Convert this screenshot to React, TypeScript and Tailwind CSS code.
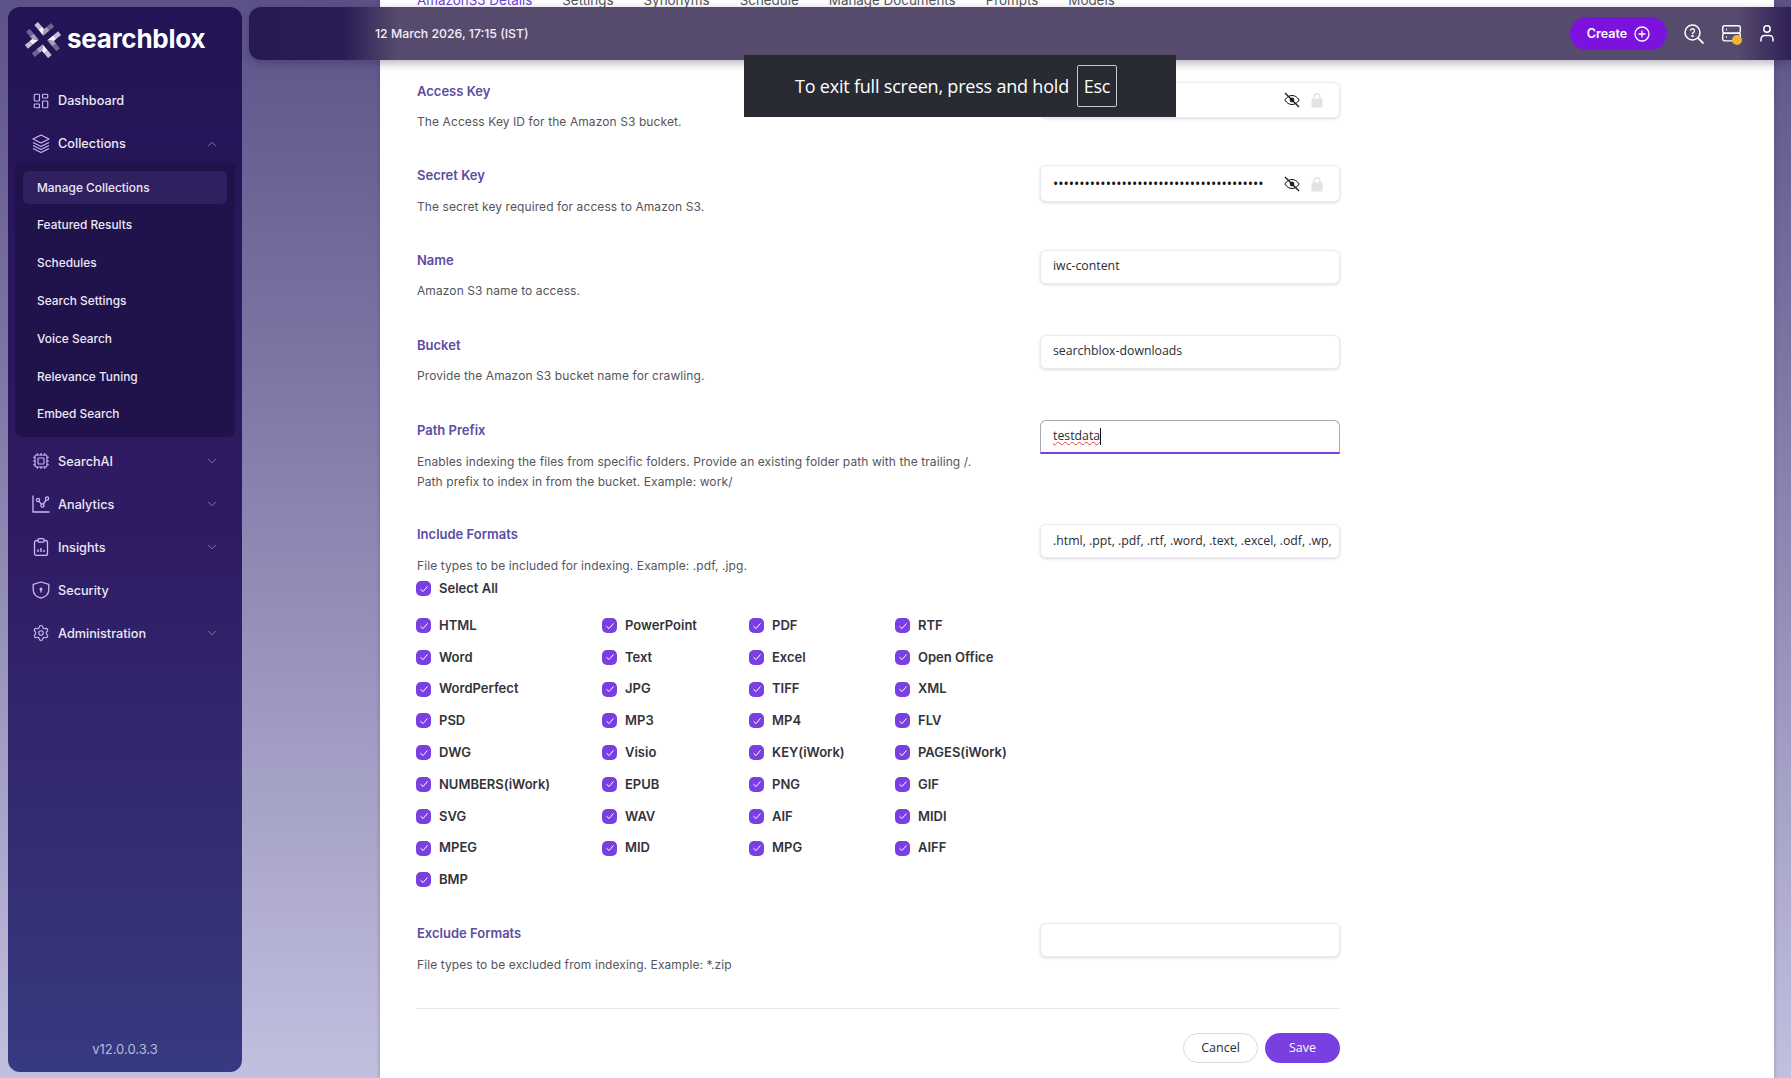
import { ChevronDown, ChevronUp, Cpu, LayoutDashboard, Settings } from "lucide-react";
import type { ReactNode } from "react";

const inter = "font-['Inter',sans-serif]";
const openSans = "font-['Open_Sans',sans-serif]";

function LayersIcon() {
  return (
    <svg width="18" height="20" viewBox="0 0 18 20" fill="none" stroke="currentColor" strokeWidth="1.2" strokeLinejoin="round">
      <path d="M9 1 17 5 9 9 1 5z" />
      <path d="M1 8.5 9 12.5 17 8.5" />
      <path d="M1 11.5 9 15.5 17 11.5" />
      <path d="M1 14.5 9 18.5 17 14.5" />
    </svg>
  );
}

function AnalyticsIcon() {
  return (
    <svg width="18" height="18" viewBox="0 0 18 18" fill="none" stroke="currentColor" strokeWidth="1.3">
      <path d="M1 0.5V17H17.5" />
      <circle cx="6" cy="5" r="1.6" />
      <circle cx="10.5" cy="10.5" r="1.6" />
      <circle cx="15" cy="3.5" r="1.6" />
      <path d="M7 6.3 9.5 9.2M11.3 9 14.2 5" />
    </svg>
  );
}

function InsightsIcon() {
  return (
    <svg width="18" height="18" viewBox="0 0 18 18" fill="none" stroke="currentColor" strokeWidth="1.3" strokeLinejoin="round">
      <rect x="2.5" y="2.5" width="13" height="15" rx="2" />
      <rect x="6" y="0.7" width="6" height="3.4" rx="1.2" fill="#2f1b63" />
      <path d="M6 14V11.5M9 14V10M12 14V12" strokeWidth="1.4" />
    </svg>
  );
}

function ShieldIcon() {
  return (
    <svg width="18" height="18" viewBox="0 0 18 18" fill="none" stroke="currentColor" strokeWidth="1.3" strokeLinejoin="round">
      <path d="M9 1 16.8 3.4V8.5C16.8 13 13.5 16 9 17.2 4.5 16 1.2 13 1.2 8.5V3.4z" />
      <circle cx="9" cy="8" r="1.5" fill="currentColor" stroke="none" />
      <path d="M9 8.5V11.5" strokeWidth="1.3" />
    </svg>
  );
}

function Logo() {
  const arm = (
    <>
      <polygon points="0,-4.5 -6,-10.5 -2.5,-14 0,-11.5" fill="#f4f2f8" />
      <polygon points="-6,-10.5 -10.5,-15 -7,-18.5 -2.5,-14" fill="#c5c0d6" />
      <polygon points="0,-4.5 6,-10.5 2.5,-14 0,-11.5" fill="#a5a0bd" />
      <polygon points="6,-10.5 10.5,-15 7,-18.5 2.5,-14" fill="#6e6690" />
    </>
  );
  return (
    <svg width="38" height="38" viewBox="-20 -20 40 40" className="shrink-0">
      <g transform="rotate(5)">
        {arm}
        <g transform="rotate(90)">{arm}</g>
        <g transform="rotate(180)">{arm}</g>
        <g transform="rotate(270)">{arm}</g>
      </g>
    </svg>
  );
}

function NavItem({ icon, label, chevron }: { icon: ReactNode; label: string; chevron?: "up" | "down" }) {
  return (
    <div className="flex h-[43px] items-center pl-6 pr-[23px] text-[12.7px] font-medium text-[#ece8f6]">
      <span className="flex w-[18px] justify-center text-[#cdb8f6]">{icon}</span>
      <span className="ml-2">{label}</span>
      {chevron === "up" && <ChevronUp className="ml-auto text-[#8d82ad]" size={14} strokeWidth={1.5} />}
      {chevron === "down" && <ChevronDown className="ml-auto text-[#8d82ad]" size={14} strokeWidth={1.5} />}
    </div>
  );
}

function Sidebar() {
  const subItems = ["Featured Results", "Schedules", "Search Settings", "Voice Search", "Relevance Tuning", "Embed Search"];
  return (
    <aside className={`${inter} ml-2 mt-[7px] flex h-[1065px] w-[234px] shrink-0 flex-col rounded-[12px] bg-gradient-to-b from-[#221455] via-[#2f1b63] to-[#363a80]`}>
      <div className="ml-[16px] mt-[13px] flex h-[40px] items-center gap-[5px]">
        <Logo />
        <span className="-mt-[2px] text-[26px] font-bold leading-none tracking-[-0.25px] text-white">searchblox</span>
      </div>
      <div className="mt-[19px]">
        <NavItem icon={<LayoutDashboard size={18} strokeWidth={1.5} />} label="Dashboard" />
        <NavItem icon={<LayersIcon />} label="Collections" chevron="up" />
      </div>
      <div className="mx-[7px] -mt-[2px] flex flex-col gap-[4.8px] rounded-b-[8px] bg-[#20124a] px-2 pb-[6px] pt-2 text-[11.9px] font-medium text-[#ece8f6]">
        <div className="flex h-[33px] items-center rounded-[6px] bg-[#31205f] pl-[14px]">Manage Collections</div>
        {subItems.map((item) => (
          <div key={item} className="flex h-[33px] items-center pl-[14px]">
            {item}
          </div>
        ))}
      </div>
      <div className="mt-[3px]">
        <NavItem icon={<Cpu size={18} strokeWidth={1.5} />} label="SearchAI" chevron="down" />
        <NavItem icon={<AnalyticsIcon />} label="Analytics" chevron="down" />
        <NavItem icon={<InsightsIcon />} label="Insights" chevron="down" />
        <NavItem icon={<ShieldIcon />} label="Security" />
        <NavItem icon={<Settings size={18} strokeWidth={1.5} />} label="Administration" chevron="down" />
      </div>
      <div className="mt-auto pb-[13px] text-center text-[13px] text-[#b5bbd8]">v12.0.0.3.3</div>
    </aside>
  );
}

function EyeOff() {
  return (
    <svg width="16" height="16" viewBox="0 0 16 16" fill="none" stroke="#111" strokeWidth="1">
      <path d="M0.8 8C3 4.8 5.3 3.5 8 3.5S13 4.8 15.2 8C13 11.2 10.7 12.5 8 12.5S3 11.2 0.8 8z" />
      <circle cx="8" cy="8" r="2.4" fill="#333" stroke="none" />
      <path d="M1 1 15 15" strokeWidth="1.2" />
    </svg>
  );
}

function LockIcon() {
  return (
    <svg width="12" height="16" viewBox="0 0 12 16" fill="#e3e3e5">
      <rect x="0.5" y="6.5" width="11" height="9" rx="1" />
      <path d="M2.5 7V4.5a3.5 3.5 0 0 1 7 0V7H8V4.5a2 2 0 0 0-4 0V7z" />
    </svg>
  );
}

function Field({ height, children }: { height: string; children?: ReactNode }) {
  return (
    <div className={`${openSans} ${height} flex w-[300px] items-center overflow-hidden whitespace-nowrap rounded-[6px] border border-[#eceaf1] bg-white pl-[12px] pr-[16px] text-[12.3px] text-[#2c2c33] shadow-[0_1px_3px_rgba(60,50,100,0.18)]`}>
      {children}
    </div>
  );
}

function SecretActions() {
  return (
    <span className="ml-auto flex items-center gap-[11px]">
      <EyeOff />
      <LockIcon />
    </span>
  );
}

function Row({ label, lines, field, rowClass }: { label: string; lines: string[]; field: ReactNode; rowClass: string }) {
  return (
    <div className={`flex justify-between ${rowClass}`}>
      <div className="pl-px">
        <div className="h-5 text-[13px] font-semibold leading-5 text-[#5d4ca3]">{label}</div>
        <div className="mt-[11.5px] text-[12px] leading-5 tracking-[0.09px] text-[#55555c]">
          {lines.map((line) => (
            <div key={line}>{line}</div>
          ))}
        </div>
      </div>
      {field}
    </div>
  );
}

function Check({ label, className }: { label: string; className?: string }) {
  return (
    <div className={`flex items-center gap-[8px] text-[13px] font-semibold text-[#33333a] ${className ?? ""}`}>
      <span className="flex h-[15px] w-[15px] items-center justify-center rounded-[5px] bg-[#7a3fe0]">
        <svg width="10" height="10" viewBox="0 0 10 10" fill="none" stroke="#fff" strokeWidth="1">
          <path d="M1.5 5.2 4 7.6 8.5 2.4" />
        </svg>
      </span>
      {label}
    </div>
  );
}

const formats = [
  "HTML", "PowerPoint", "PDF", "RTF",
  "Word", "Text", "Excel", "Open Office",
  "WordPerfect", "JPG", "TIFF", "XML",
  "PSD", "MP3", "MP4", "FLV",
  "DWG", "Visio", "KEY(iWork)", "PAGES(iWork)",
  "NUMBERS(iWork)", "EPUB", "PNG", "GIF",
  "SVG", "WAV", "AIF", "MIDI",
  "MPEG", "MID", "MPG", "AIFF",
  "BMP",
];

function Panel() {
  const tabs = ["Settings", "Synonyms", "Schedule", "Manage Documents", "Prompts", "Models"];
  return (
    <main className={`${inter} ml-[138px] h-[1078px] w-[1394px] shrink-0 overflow-hidden bg-white pl-[36px] shadow-[0_0_4px_rgba(60,50,100,0.4)]`}>
      <div className="-mt-[9px] flex h-[18px] items-center gap-[30px] pl-px text-[13.4px] text-[#55555c]">
        <span className="text-[#6d3fd8]">AmazonS3 Details</span>
        {tabs.map((tab) => (
          <span key={tab}>{tab}</span>
        ))}
      </div>

      <div className="mt-[71.5px] w-[924px]">
        <Row
          rowClass="h-[84.5px]"
          label="Access Key"
          lines={["The Access Key ID for the Amazon S3 bucket."]}
          field={
            <Field height="h-[36px] mt-px">
              <SecretActions />
            </Field>
          }
        />
        <Row
          rowClass="h-[84.5px]"
          label="Secret Key"
          lines={["The secret key required for access to Amazon S3."]}
          field={
            <Field height="h-[37px]">
              <span className="text-[14px] text-[#111]">{"•".repeat(40)}</span>
              <SecretActions />
            </Field>
          }
        />
        <Row
          rowClass="h-[85px]"
          label="Name"
          lines={["Amazon S3 name to access."]}
          field={<Field height="h-[34px]">iwc-content</Field>}
        />
        <Row
          rowClass="h-[85.5px]"
          label="Bucket"
          lines={["Provide the Amazon S3 bucket name for crawling."]}
          field={<Field height="h-[34px]">searchblox-downloads</Field>}
        />
        <Row
          rowClass="h-[104px]"
          label="Path Prefix"
          lines={[
            "Enables indexing the files from specific folders. Provide an existing folder path with the trailing /.",
            "Path prefix to index in from the bucket. Example: work/",
          ]}
          field={
            <div className={`${openSans} flex h-[34px] w-[300px] items-center rounded-t-[6px] border border-b-2 border-[#aaa9af] border-b-[#7a3fe0] pl-[12px] text-[12.3px] text-[#2c2c33]`}>
              <span className="underline decoration-[#e2403f] decoration-wavy decoration-1">testdata</span>
              <span className="h-[17px] w-px bg-[#111]" />
            </div>
          }
        />
        <Row
          rowClass="h-[55px]"
          label="Include Formats"
          lines={["File types to be included for indexing. Example: .pdf, .jpg."]}
          field={<Field height="h-[34px]">.html, .ppt, .pdf, .rtf, .word, .text, .excel, .odf, .wp,</Field>}
        />
        <Check label="Select All" />
        <div className="mt-[17px] grid grid-cols-[186px_147px_146px_1fr] gap-y-[11.8px]">
          {formats.map((format) => (
            <Check key={format} label={format} className="h-5" />
          ))}
        </div>
        <div className="mt-[33.5px]">
          <Row
            rowClass="h-[85px]"
            label="Exclude Formats"
            lines={["File types to be excluded from indexing. Example: *.zip"]}
            field={<Field height="h-[34px]" />}
          />
        </div>
        <div className="border-t border-[#e6e7f0] pt-[24px]">
          <div className={`${openSans} flex justify-end gap-[7px] text-[12.5px]`}>
            <button className="h-[30px] w-[75px] rounded-full border border-[#d9d9dd] bg-white text-[#2c2c33]">Cancel</button>
            <button className="h-[30px] w-[75px] rounded-full bg-[#7a3fe0] text-white">Save</button>
          </div>
        </div>
      </div>
    </main>
  );
}

function Header() {
  return (
    <header className={`${inter} absolute left-[249px] right-0 top-[7px] flex h-[53px] items-center rounded-l-[12px] bg-[linear-gradient(90deg,#261a50_0,#2a1d55_95px,#574b6d_150px,#574b6d_calc(100%-55px),#2f1f58_100%)] pl-[126px] pr-[17px] shadow-[0_3px_10px_rgba(40,30,70,0.35)]`}>
      <span className="mt-[2px] text-[12.3px] font-medium text-[#f2eff7]">12 March 2026, 17:15 (IST)</span>
      <button className="ml-auto flex h-[33px] w-[97px] items-center justify-center gap-[7px] rounded-full bg-[#7d12df] pt-px text-[12.5px] font-semibold text-white">
        Create
        <svg width="16" height="16" viewBox="0 0 16 16" fill="none" stroke="#fff" strokeWidth="1.3">
          <circle cx="8" cy="8" r="7" />
          <path d="M8 4.5V11.5M4.5 8H11.5" />
        </svg>
      </button>
      <svg className="ml-[17px]" width="20" height="20" viewBox="0 0 20 20" fill="none" stroke="#fff" strokeWidth="1.5">
        <circle cx="8.5" cy="8.5" r="7.5" />
        <path d="M14 14 19.5 19.5" strokeWidth="1.8" />
        <path d="M6.5 6.8a2 2 0 1 1 2.8 1.8c-.6.3-.8.7-.8 1.4" strokeWidth="1.3" />
        <circle cx="8.5" cy="12" r="0.5" fill="#fff" />
      </svg>
      <span className="relative ml-[18px] h-[18px] w-[19px]">
        <svg width="19" height="17" viewBox="0 0 19 17" fill="none" stroke="#fff" strokeWidth="1.4">
          <rect x="0.7" y="0.7" width="17.6" height="7.6" rx="2" />
          <rect x="0.7" y="8.3" width="17.6" height="7.6" rx="2" />
          <path d="M4 4.5H5M4 12H5" />
        </svg>
        <span className="absolute -bottom-[2px] -right-[1px] h-[10px] w-[10px] rounded-full bg-[#f0b33c]" />
      </span>
      <svg className="ml-[19px]" width="14" height="17" viewBox="0 0 14 17" fill="none" stroke="#fff" strokeWidth="1.5">
        <circle cx="7" cy="4" r="3.2" />
        <path d="M1 16.5V14a3.5 3.5 0 0 1 3.5-3.5h5A3.5 3.5 0 0 1 13 14v2.5" />
      </svg>
    </header>
  );
}

function FullscreenToast() {
  return (
    <div className={`${openSans} absolute left-[744px] top-[55px] flex h-[62px] w-[432px] items-center justify-end gap-[8px] bg-[#292b33] pr-[59px] text-[18px] tracking-[-0.2px] text-white`}>
      <span>To exit full screen, press and hold</span>
      <span className="flex h-[42px] w-[40px] items-center justify-center rounded-[2px] border border-[#c7c8cc]">Esc</span>
    </div>
  );
}

export default function App() {
  return (
    <div className="relative flex h-[1078px] w-[1791px] overflow-hidden bg-gradient-to-b from-[#5c5287] to-[#c2c0df]">
      <Sidebar />
      <Panel />
      <Header />
      <FullscreenToast />
    </div>
  );
}
